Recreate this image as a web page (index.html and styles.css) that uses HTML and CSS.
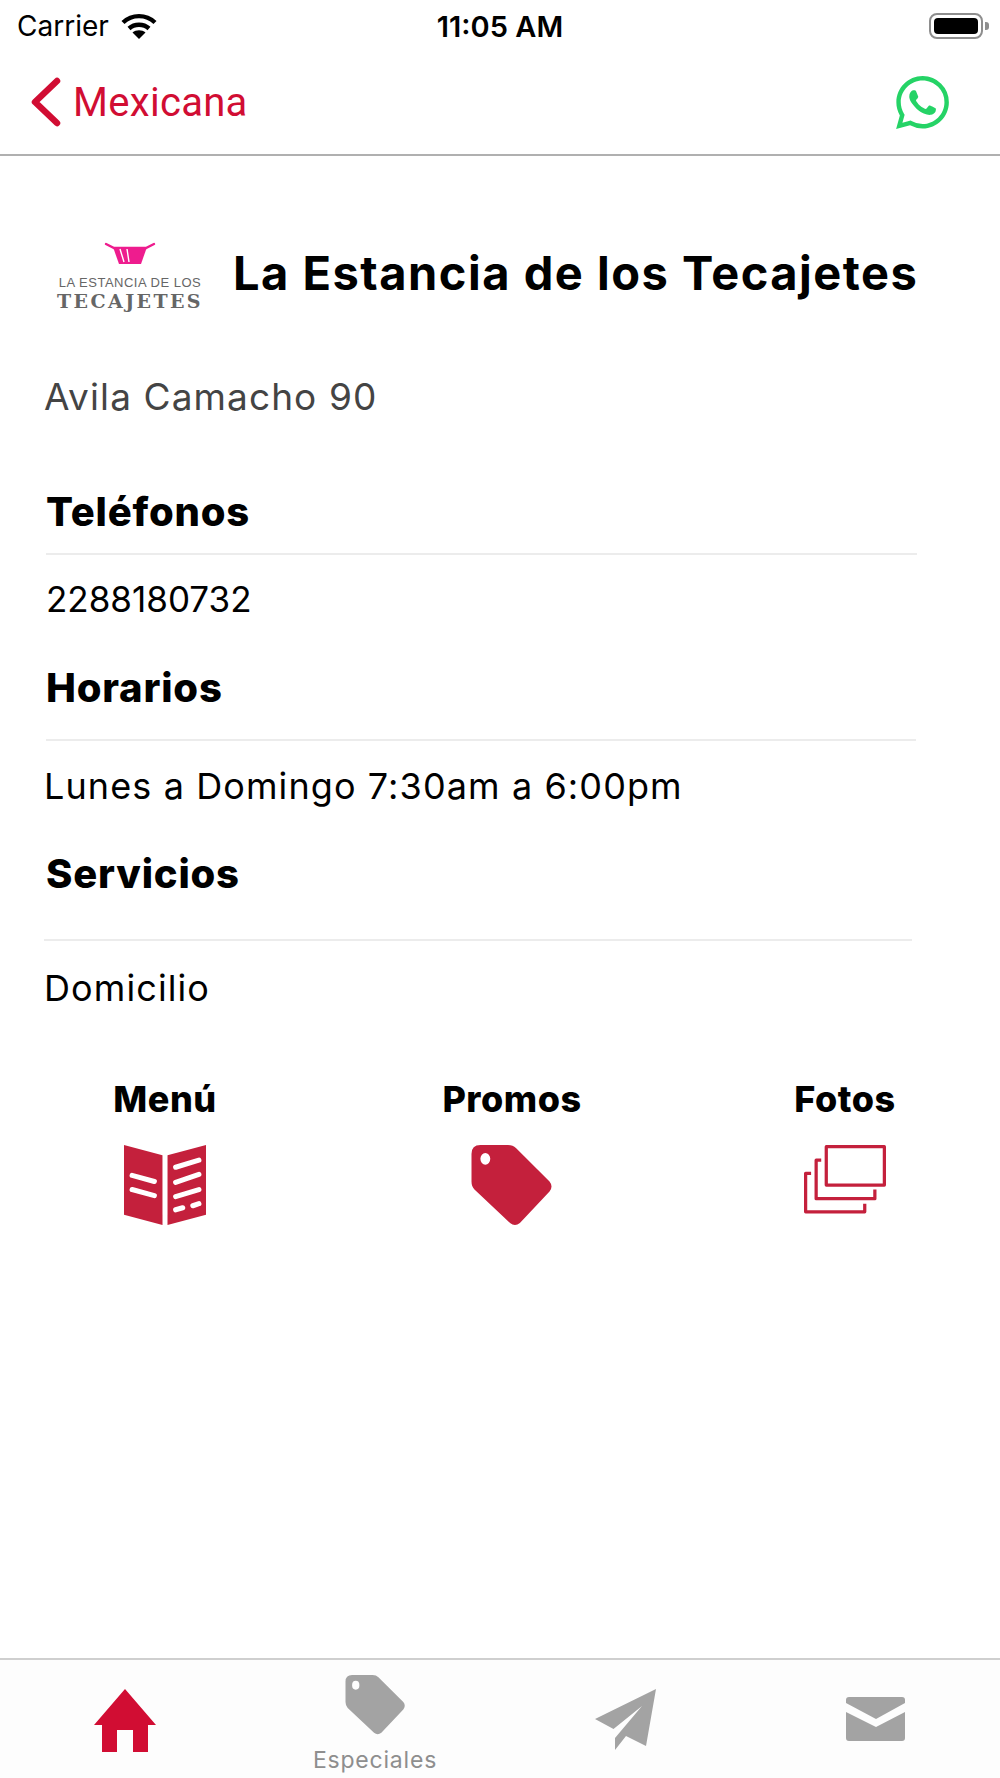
FILE: index.html
```html
<!DOCTYPE html>
<html lang="es">
<head>
    <meta charset="UTF-8">
    <meta name="viewport" content="width=device-width, initial-scale=1.0">
    <title>La Estancia de los Tecajetes</title>
    <link rel="stylesheet" href="styles.css">
</head>
<body>
    <svg class="sprites" width="0" height="0">
        <symbol id="tag" viewBox="0 0 82 82">
            <path fill-rule="evenodd" d="M9 0H37Q42 0 45 3L79 37Q83 42 79 47L49 79Q44 83 39 79L3 45Q0 42 0 37V9Q0 0 9 0ZM14 8A5 6 0 1 0 14 20A5 6 0 1 0 14 8Z"/>
        </symbol>
    </svg>

    <div class="page">
        <div class="status-bar">
            <div class="carrier">
                <span>Carrier</span>
                <svg class="wifi" viewBox="0 0 36 26" fill="none" stroke="#000" stroke-width="4.4">
                    <path d="M2 9.5C11 1 25 1 34 9.5"/>
                    <path d="M8 15.5C13.5 10.5 22.5 10.5 28 15.5"/>
                    <path d="M18 26L11.5 19.5C15 16.5 21 16.5 24.5 19.5Z" fill="#000" stroke="none"/>
                </svg>
            </div>
            <div class="clock">11:05 AM</div>
            <div class="battery"><div class="battery-fill"></div></div>
        </div>

        <div class="nav-bar">
            <a class="back" href="#">
                <svg class="chevron" viewBox="0 0 30 50" fill="none" stroke="#d10d33" stroke-width="6.5" stroke-linecap="round" stroke-linejoin="round">
                    <path d="M26 4L4 25L26 46"/>
                </svg>
                <span>Mexicana</span>
            </a>
            <svg class="whatsapp" viewBox="0 0 24 24" fill="#25d366">
                <path d="M17.472 14.382c-.297-.149-1.758-.867-2.03-.967-.273-.099-.471-.148-.67.15-.197.297-.767.966-.94 1.164-.173.199-.347.223-.644.075-.297-.15-1.255-.463-2.39-1.475-.883-.788-1.48-1.761-1.653-2.059-.173-.297-.018-.458.13-.606.134-.133.298-.347.446-.52.149-.174.198-.298.298-.497.099-.198.05-.371-.025-.52-.075-.149-.669-1.612-.916-2.207-.242-.579-.487-.5-.669-.51-.173-.008-.371-.01-.57-.01-.198 0-.52.074-.792.372-.272.297-1.04 1.016-1.04 2.479 0 1.462 1.065 2.875 1.213 3.074.149.198 2.096 3.2 5.077 4.487.709.306 1.262.489 1.694.625.712.227 1.36.195 1.871.118.571-.085 1.758-.719 2.006-1.413.248-.694.248-1.289.173-1.413-.074-.124-.272-.198-.57-.347m-5.421 7.403h-.004a9.87 9.87 0 01-5.031-1.378l-.361-.214-3.741.982.998-3.648-.235-.374a9.86 9.86 0 01-1.51-5.26c.001-5.45 4.436-9.884 9.888-9.884 2.64 0 5.122 1.03 6.988 2.898a9.825 9.825 0 012.893 6.994c-.003 5.45-4.437 9.884-9.885 9.884m8.413-18.297A11.815 11.815 0 0012.05 0C5.495 0 .16 5.335.157 11.892c0 2.096.547 4.142 1.588 5.945L.057 24l6.305-1.654a11.882 11.882 0 005.683 1.448h.005c6.554 0 11.89-5.335 11.893-11.893a11.821 11.821 0 00-3.48-8.413z"/>
            </svg>
        </div>

        <div class="content">
            <div class="title-row">
                <div class="logo">
                    <svg class="logo-pot" viewBox="0 0 52 24">
                        <path d="M2 3L10 7H42L50 3" fill="none" stroke="#ee1c8e" stroke-width="2.4" stroke-linecap="round"/>
                        <path d="M9 6H43L37 23H15Z" fill="#ee1c8e"/>
                        <path d="M16 8L20 21M23 8L25 21" stroke="#fff" stroke-width="1.4"/>
                    </svg>
                    <div class="logo-line">LA ESTANCIA DE LOS</div>
                    <div class="logo-name">TECAJETES</div>
                </div>
                <h1>La Estancia de los Tecajetes</h1>
            </div>

            <p class="address">Avila Camacho 90</p>

            <h2 class="heading-phones">Teléfonos</h2>
            <p class="value value-phones">2288180732</p>

            <h2 class="heading-hours">Horarios</h2>
            <p class="value value-hours">Lunes a Domingo 7:30am a 6:00pm</p>

            <h2 class="heading-services">Servicios</h2>
            <p class="value value-services">Domicilio</p>

            <div class="actions">
                <div class="action">
                    <div class="action-label">Menú</div>
                    <svg class="action-icon" viewBox="0 0 81 80">
                        <path d="M0 0L38 10V79L0 69Z" fill="#c4203c"/>
                        <path d="M43 10L81 0V69L43 79Z" fill="#c4203c"/>
                        <path d="M8 30L30 36M8 44L30 50M51 22L74 15M51 37L74 29M51 51L74 44M51 64L58 62M68 60L74 58" stroke="#fff" stroke-width="5" stroke-linecap="round"/>
                    </svg>
                </div>
                <div class="action">
                    <div class="action-label">Promos</div>
                    <svg class="action-icon tag-red"><use href="#tag"/></svg>
                </div>
                <div class="action">
                    <div class="action-label">Fotos</div>
                    <svg class="action-icon" viewBox="0 0 81 80" fill="none" stroke="#c4203c" stroke-width="3.2" stroke-linejoin="round">
                        <rect x="22" y="1.6" width="57.4" height="38"/>
                        <path d="M17 15H12V53H70V44"/>
                        <path d="M7 28H1.6V66H60V58"/>
                    </svg>
                </div>
            </div>
        </div>

        <div class="tab-bar">
            <div class="tab">
                <svg class="tab-home" viewBox="0 0 62 63" fill="#d10d33">
                    <path fill-rule="evenodd" d="M31 0L62 36H54V63H39V41H23V63H8V36H0Z"/>
                </svg>
            </div>
            <div class="tab tab-specials">
                <svg class="tab-tag"><use href="#tag"/></svg>
                <span class="tab-label">Especiales</span>
            </div>
            <div class="tab">
                <svg class="tab-plane" viewBox="0 0 61 61" fill="#a3a3a3">
                    <path d="M61 0L0 30L18.500 40L47 17L20 49V61L31 47L51 57Z"/>
                </svg>
            </div>
            <div class="tab">
                <svg class="tab-mail" viewBox="0 0 59 45" fill="#a3a3a3">
                    <path d="M3 0H56Q59 0 59 3V6L30 22L0 6V3Q0 0 3 0Z"/>
                    <path d="M0 15L30 30L59 15V41Q59 44 56 44H3Q0 44 0 41Z"/>
                </svg>
            </div>
        </div>
    </div>
</body>
</html>
```

FILE: styles.css
```css
* { box-sizing: border-box; }
body {
    margin: 0;
    background: white;
    font-family: Inter, "Liberation Sans", sans-serif;
    color: black;
}
.sprites { display: block; height: 0; }
.page {
    display: flex;
    flex-direction: column;
    height: 1778px;
}

/* status bar */
.status-bar {
    height: 52px;
    display: grid;
    grid-template-columns: 1fr auto 1fr;
    align-items: center;
    padding: 0 17px;
}
.carrier {
    display: flex;
    align-items: center;
    gap: 12px;
    font-size: 28px;
}
.wifi { width: 36px; height: 26px; }
.clock {
    text-align: center;
    font-size: 29px;
    font-weight: 600;
}
.battery {
    justify-self: end;
    width: 54px;
    height: 26px;
    border: 2px solid #8e8e8e;
    border-radius: 8px;
    padding: 3px;
    position: relative;
}
.battery::after {
    content: "";
    position: absolute;
    right: -8px;
    top: 7px;
    width: 4px;
    height: 8px;
    background: #8e8e8e;
    border-radius: 0 3px 3px 0;
}
.battery-fill {
    height: 100%;
    background: black;
    border-radius: 4px;
}

/* nav */
.nav-bar {
    height: 104px;
    flex: none;
    display: flex;
    align-items: center;
    justify-content: space-between;
    padding: 0 51px 2px 31px;
    border-bottom: 2px solid #b0b0b0;
}
.back {
    display: flex;
    align-items: center;
    gap: 12px;
    color: #d10d33;
    text-decoration: none;
    font-family: Roboto, sans-serif;
    font-size: 40px;
    letter-spacing: .3px;
}
.chevron { width: 30px; height: 50px; }
.whatsapp { width: 53px; height: 53px; }

/* content */
.content {
    flex: 1;
    padding: 0 83px 0 44px;
}
.title-row {
    display: flex;
    align-items: center;
    margin: 85px 0 0 11px;
    gap: 28px;
}
.logo {
    width: 150px;
    flex: none;
    text-align: center;
    color: #666;
    line-height: 1;
    font-family: "Liberation Sans", sans-serif;
}
.logo-pot { display: block; width: 52px; height: 24px; margin: 0 auto 11px; }
.logo-line { font-size: 13px; letter-spacing: .5px; white-space: nowrap; }
.logo-name {
    font-family: "DejaVu Serif", serif;
    font-size: 19px;
    font-weight: bold;
    letter-spacing: 2.400px;
    margin-top: 3px;
    white-space: nowrap;
}
h1 {
    margin: 0 0 8px;
    font-size: 47px;
    font-weight: 700;
    letter-spacing: 1.500px;
    white-space: nowrap;
}
.address {
    margin: 61px 0 0;
    font-size: 37px;
    letter-spacing: 1.100px;
    line-height: 50px;
    color: #444;
}
h2 {
    margin: 0 0 0 2px;
    font-size: 40px;
    font-weight: 800;
    letter-spacing: .8px;
    line-height: 50px;
    border-bottom: 2px solid #ececec;
}
.value {
    margin: 0;
    font-size: 36px;
    letter-spacing: 1.100px;
    line-height: 50px;
}
.heading-phones { margin-top: 65px; padding-bottom: 16px; }
.value-phones { margin: 19px 0 0 2px; font-size: 35px; letter-spacing: 0; }
.heading-hours { margin: 39px 1px 0 2px; padding-bottom: 26px; }
.value-hours { margin-top: 20px; }
.heading-services { margin: 38px 5px 0 0; padding: 0 0 40px 2px; }
.value-services { margin-top: 22px; }

/* menu / promos / fotos */
.actions {
    display: grid;
    grid-template-columns: 330px 364px 302px;
    margin: 64px -83px 0 -44px;
}
.action {
    display: flex;
    flex-direction: column;
    align-items: center;
    gap: 24px;
}
.action-label {
    font-size: 36px;
    font-weight: 800;
    letter-spacing: .5px;
    line-height: 44px;
}
.action-icon { width: 82px; height: 81px; }
.tag-red { fill: #c4203c; }

/* tabs */
.tab-bar {
    height: 120px;
    flex: none;
    display: grid;
    grid-template-columns: repeat(4, 1fr);
    border-top: 2px solid #cfcfcf;
    background: #fdfdfd;
}
.tab {
    display: flex;
    flex-direction: column;
    align-items: center;
    padding-top: 29px;
}
.tab-specials { padding-top: 15px; }
.tab-home { width: 62px; height: 63px; }
.tab-tag { width: 61px; height: 60px; fill: #a3a3a3; }
.tab-plane { width: 61px; height: 61px; }
.tab-mail { width: 59px; height: 45px; margin-top: 8px; }
.tab-label {
    margin-top: 11px;
    font-size: 23px;
    line-height: 28px;
    color: #8e8e8e;
    letter-spacing: .8px;
}
```
